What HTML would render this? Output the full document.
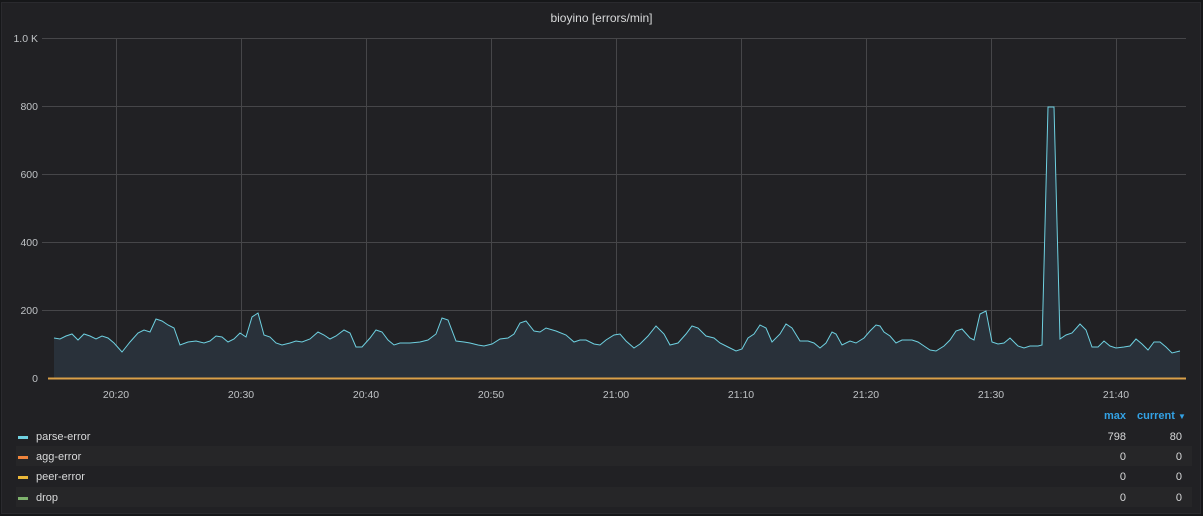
<!DOCTYPE html>
<html><head><style>
body{margin:0;background:#161719;width:1203px;height:516px;overflow:hidden;font-family:"Liberation Sans",sans-serif;}
.panel{position:absolute;left:1px;top:2px;width:1200px;height:512px;background:#212124;border:1px solid #2a2a2e;box-sizing:border-box;}
.title{position:absolute;top:11px;left:0;width:100%;text-align:center;color:#d8d9da;font-size:12px;}
.yl{position:absolute;right:1165px;color:#bfc2c5;font-size:10.5px;text-align:right;}
.xl{position:absolute;top:389px;color:#bfc2c5;font-size:10.5px;width:40px;text-align:center;}
.row{position:absolute;left:16px;width:1176px;height:20px;font-size:11px;color:#d8d9da;}
.row.alt{background:#262628;}
.sw{position:absolute;left:2px;top:10px;width:10px;height:3px;}
.nm{position:absolute;left:20px;top:5px;}
.v1{position:absolute;right:66px;top:5px;}
.v2{position:absolute;right:10px;top:5px;}
</style></head><body>
<div class="panel"></div>
<div class="title">bioyino [errors/min]</div>
<div class="yl" style="top:33px">1.0 K</div>
<div class="yl" style="top:101px">800</div>
<div class="yl" style="top:169px">600</div>
<div class="yl" style="top:237px">400</div>
<div class="yl" style="top:305px">200</div>
<div class="yl" style="top:373px">0</div>
<svg width="1203" height="516" style="position:absolute;left:0;top:0">
<g stroke="#464649" stroke-width="1">
<line x1="42" y1="38.5" x2="1186" y2="38.5"/><line x1="42" y1="106.5" x2="1186" y2="106.5"/><line x1="42" y1="174.5" x2="1186" y2="174.5"/><line x1="42" y1="242.5" x2="1186" y2="242.5"/><line x1="42" y1="310.5" x2="1186" y2="310.5"/>
<line x1="116.5" y1="38" x2="116.5" y2="378"/><line x1="241.5" y1="38" x2="241.5" y2="378"/><line x1="366.5" y1="38" x2="366.5" y2="378"/><line x1="491.5" y1="38" x2="491.5" y2="378"/><line x1="616.5" y1="38" x2="616.5" y2="378"/><line x1="741.5" y1="38" x2="741.5" y2="378"/><line x1="866.5" y1="38" x2="866.5" y2="378"/><line x1="991.5" y1="38" x2="991.5" y2="378"/><line x1="1116.5" y1="38" x2="1116.5" y2="378"/>
</g>
<polygon fill="#29313a" points="54,378 54,338 60,339 66,336 72,334 78,340 84,334 90,336 96,339 102,336 108,338 114,343 122,352 130,342 138,333 144,330 150,332 156,319 162,321 168,325 174,328 180,345 188,342 196,341 204,343 210,341 216,336 222,337 228,342 234,339 240,333 246,337 252,317 258,313 264,335 270,337 276,343 282,345 290,343 296,341 302,342 310,339 318,332 324,335 330,339 336,336 344,330 350,333 356,347 362,347 370,338 376,330 382,332 388,340 394,345 400,343 410,343 420,342 428,340 436,334 442,318 448,320 456,341 464,342 470,343 478,345 484,346 492,344 500,339 508,338 514,334 520,323 526,321 534,331 540,332 546,328 556,331 566,335 574,342 580,340 586,340 594,344 600,345 606,340 614,335 620,334 626,341 634,348 640,344 648,336 656,326 664,334 670,345 678,343 686,334 692,326 698,328 706,336 714,338 720,343 728,347 736,351 742,349 748,338 754,334 760,325 766,328 772,342 780,334 786,324 792,328 800,341 808,341 814,343 820,348 826,343 832,332 836,334 842,345 850,341 856,343 864,338 870,331 876,325 880,326 884,332 890,336 896,343 902,340 912,340 918,342 924,346 930,350 936,351 944,346 950,340 956,331 962,329 970,338 974,340 980,314 986,311 992,342 998,344 1004,343 1010,338 1018,346 1024,348 1030,346 1038,346 1042,345 1048,107 1054,107 1060,339 1066,335 1072,333 1080,324 1086,330 1092,347 1098,347 1104,341 1110,346 1116,348 1124,347 1130,346 1136,339 1142,344 1148,350 1154,342 1160,342 1166,347 1172,353 1180,351 1180,378"/>
<polyline fill="none" stroke="#6ed0e0" stroke-width="1" points="54,338 60,339 66,336 72,334 78,340 84,334 90,336 96,339 102,336 108,338 114,343 122,352 130,342 138,333 144,330 150,332 156,319 162,321 168,325 174,328 180,345 188,342 196,341 204,343 210,341 216,336 222,337 228,342 234,339 240,333 246,337 252,317 258,313 264,335 270,337 276,343 282,345 290,343 296,341 302,342 310,339 318,332 324,335 330,339 336,336 344,330 350,333 356,347 362,347 370,338 376,330 382,332 388,340 394,345 400,343 410,343 420,342 428,340 436,334 442,318 448,320 456,341 464,342 470,343 478,345 484,346 492,344 500,339 508,338 514,334 520,323 526,321 534,331 540,332 546,328 556,331 566,335 574,342 580,340 586,340 594,344 600,345 606,340 614,335 620,334 626,341 634,348 640,344 648,336 656,326 664,334 670,345 678,343 686,334 692,326 698,328 706,336 714,338 720,343 728,347 736,351 742,349 748,338 754,334 760,325 766,328 772,342 780,334 786,324 792,328 800,341 808,341 814,343 820,348 826,343 832,332 836,334 842,345 850,341 856,343 864,338 870,331 876,325 880,326 884,332 890,336 896,343 902,340 912,340 918,342 924,346 930,350 936,351 944,346 950,340 956,331 962,329 970,338 974,340 980,314 986,311 992,342 998,344 1004,343 1010,338 1018,346 1024,348 1030,346 1038,346 1042,345 1048,107 1054,107 1060,339 1066,335 1072,333 1080,324 1086,330 1092,347 1098,347 1104,341 1110,346 1116,348 1124,347 1130,346 1136,339 1142,344 1148,350 1154,342 1160,342 1166,347 1172,353 1180,351"/>
<line x1="48" y1="378.5" x2="1186" y2="378.5" stroke="#d9a048" stroke-width="2"/>
</svg>
<div class="xl" style="left:96px">20:20</div><div class="xl" style="left:221px">20:30</div><div class="xl" style="left:346px">20:40</div><div class="xl" style="left:471px">20:50</div><div class="xl" style="left:596px">21:00</div><div class="xl" style="left:721px">21:10</div><div class="xl" style="left:846px">21:20</div><div class="xl" style="left:971px">21:30</div><div class="xl" style="left:1096px">21:40</div>
<div style="position:absolute;top:410px;left:1104px;color:#33a2e5;font-size:11px;font-weight:bold">max</div>
<div style="position:absolute;top:410px;left:1137px;color:#33a2e5;font-size:11px;font-weight:bold">current <span style="font-size:8px">▼</span></div>
<div class="row" style="top:426px"><div class="sw" style="background:#6ed0e0"></div><div class="nm">parse-error</div><div class="v1">798</div><div class="v2">80</div></div>
<div class="row alt" style="top:446px"><div class="sw" style="background:#ef843c"></div><div class="nm">agg-error</div><div class="v1">0</div><div class="v2">0</div></div>
<div class="row" style="top:466px"><div class="sw" style="background:#eab839"></div><div class="nm">peer-error</div><div class="v1">0</div><div class="v2">0</div></div>
<div class="row alt" style="top:487px"><div class="sw" style="background:#7eb26d"></div><div class="nm">drop</div><div class="v1">0</div><div class="v2">0</div></div>
</body></html>
